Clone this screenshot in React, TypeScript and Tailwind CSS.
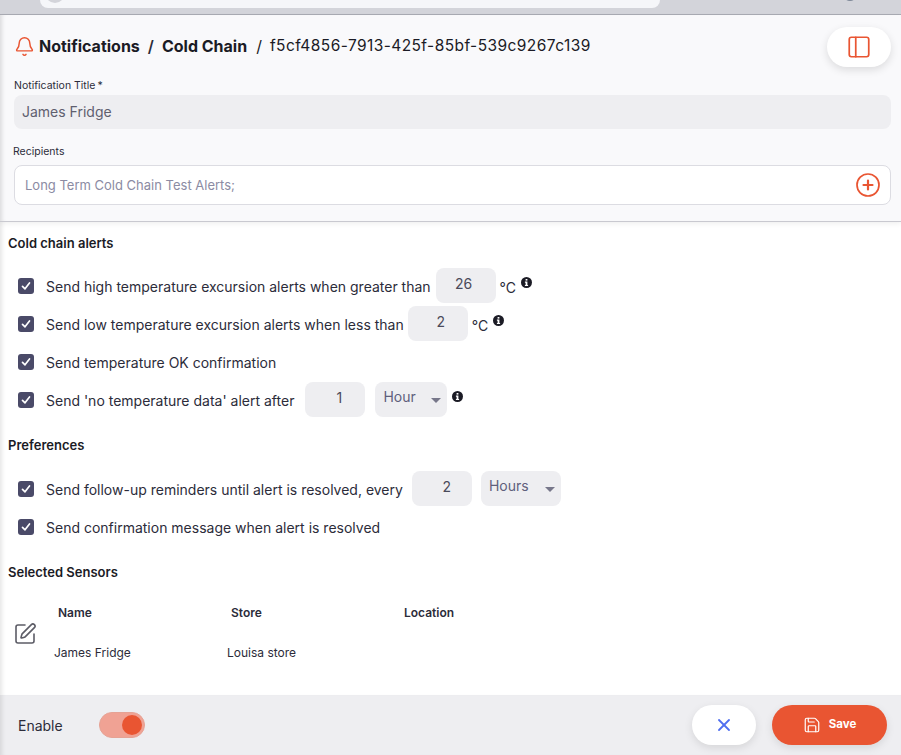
import React from "react";
import { Bell, PanelLeft, X, Save, SquarePen } from "lucide-react";

const Check = () => (
  <span className="flex h-[16px] w-[16px] shrink-0 items-center justify-center rounded-[3px] bg-[#4a4a68]">
    <svg width="12" height="12" viewBox="0 0 12 12" fill="none">
      <path d="M2.5 6.3L5 8.8L9.5 3" stroke="white" strokeWidth="1.7" strokeLinecap="round" strokeLinejoin="round" />
    </svg>
  </span>
);

const Info = () => (
  <svg width="11" height="11" viewBox="0 0 11 11" className="shrink-0">
    <circle cx="5.5" cy="5.5" r="5.5" fill="#1b1b25" />
    <rect x="4.6" y="2" width="1.8" height="1.6" fill="white" />
    <path d="M3.9 4.6H6.4V7.9H7.1V9H3.9V7.9H4.6V5.7H3.9Z" fill="white" />
  </svg>
);

const Num = ({ v, cls = "" }: { v: string; cls?: string }) => (
  <span className={`flex h-[35px] w-[60px] ${cls} shrink-0 items-start justify-center rounded-[8px] bg-[#eeeef1] pt-[6px] text-[14px] leading-[20px] text-[#4a4a5a]`}>
    {v}
  </span>
);

const Sel = ({ v, w }: { v: string; w: string }) => (
  <span className={`relative flex h-[35px] ${w} shrink-0 items-start rounded-[8px] bg-[#eeeef1] pl-[8px] pt-[5px] text-[14px] leading-[20px] text-[#5f5f7c]`}>
    {v}
    <span className="absolute right-[6px] top-[16px] h-0 w-0 border-x-[5px] border-t-[5px] border-x-transparent border-t-[#77778a]" />
  </span>
);

const Row = ({ children }: { children: React.ReactNode }) => (
  <div className="flex h-[38px] items-center pl-[18px] text-[14px] text-[#2c2c3a]">
    <Check />
    {children}
  </div>
);

const Title = ({ children, cls }: { children: React.ReactNode; cls: string }) => (
  <div className={`pl-[8px] text-[13px] font-semibold leading-[16px] text-[#1b1b25] ${cls}`}>{children}</div>
);

export default function App() {
  return (
    <div className="flex h-[755px] w-[901px] flex-col overflow-hidden bg-white font-['Inter',sans-serif]">
      <div className="flex h-[15px] shrink-0 items-start justify-between border-b border-[#a9abb3] bg-[#d3d4da] pl-[40px] pr-[44px]">
        <div className="flex h-[8px] w-[620px] items-start overflow-hidden rounded-b-[14px] bg-[#f5f6f9] pl-[5px]">
          <span className="mt-[-17px] h-[20px] w-[20px] shrink-0 rounded-full bg-[#d3d4da]" />
        </div>
        <span className="mt-[-13px] h-[14px] w-[14px] rounded-full bg-[#7d8797]" />
      </div>

      <div className="flex h-[207px] shrink-0 flex-col border-b border-[#c9c9d0] bg-[#f9f9fb] pl-[14px] pr-[10px] shadow-[inset_5px_0_4px_-3px_rgba(0,0,0,0.12),0_2px_5px_rgba(0,0,0,0.06)]">
        <div className="flex h-[64px] shrink-0 items-start justify-between pt-[12px]">
          <div className="flex h-[40px] items-center pb-[2px]">
            <Bell size={21} strokeWidth={1.7} className="text-[#e95532]" />
            <span className="ml-[4px] text-[16px] font-bold text-[#1b1b25]">Notifications</span>
            <span className="ml-[8px] text-[16px] font-semibold text-[#2c2c3a]">/</span>
            <span className="ml-[8px] text-[16px] font-bold text-[#1b1b25]">Cold Chain</span>
            <span className="ml-[9px] text-[16px] text-[#1b1b25]">/</span>
            <span className="ml-[8px] text-[15.5px] tracking-[0.42px] text-[#1b1b25]">f5cf4856-7913-425f-85bf-539c9267c139</span>
          </div>
          <div className="flex h-[40px] w-[64px] items-center justify-center rounded-[20px] bg-white shadow-[0_3px_8px_rgba(0,0,0,0.12)]">
            <PanelLeft size={26} strokeWidth={1.6} className="text-[#e95532]" />
          </div>
        </div>
        <div className="text-[10.5px] leading-[14px] text-[#2c2c3a]">Notification Title<span className="ml-[2px]">*</span></div>
        <div className="mt-[2px] flex h-[34px] shrink-0 items-center rounded-[8px] bg-[#eeeef1] pb-[2px] pl-[8px] text-[14px] text-[#5f5f6f]">James Fridge</div>
        <div className="ml-[-1px] mt-[16px] text-[10.5px] leading-[14px] text-[#2c2c3a]">Recipients</div>
        <div className="mt-[6px] flex h-[40px] shrink-0 items-center justify-between rounded-[8px] border border-[#dcdce2] bg-white pl-[10px] pr-[10px] text-[14px] text-[#8b8ba3]">
          <span className="pt-[1px] text-[13px]">Long Term Cold Chain Test Alerts;</span>
          <svg width="24" height="24" viewBox="0 0 24 24" fill="none" stroke="#e95532" strokeWidth="1.7" strokeLinecap="round">
            <circle cx="12" cy="12" r="11" />
            <path d="M12 7.5V16.5M7.5 12H16.5" strokeWidth="2.2" />
          </svg>
        </div>
      </div>

      <div className="flex min-h-0 flex-1 flex-col shadow-[inset_5px_0_4px_-3px_rgba(0,0,0,0.1)]">
        <Title cls="mt-[13px]">Cold chain alerts</Title>
        <div className="mt-[16px]">
          <Row>
            <span className="ml-[12px]">Send high temperature excursion alerts when greater than</span>
            <Num v="26" cls="ml-[5px] mb-[1px] pr-[4px]" />
            <span className="ml-[4px] mt-[2px] text-[#2c2c3a]">°C</span>
            <span className="mb-[7px] ml-[5px]"><Info /></span>
          </Row>
          <Row>
            <span className="ml-[12px]">Send low temperature excursion alerts when less than</span>
            <Num v="2" cls="ml-[4px] mb-[1px] pl-[6px]" />
            <span className="ml-[4px] mt-[2px] text-[#2c2c3a]">°C</span>
            <span className="mb-[7px] ml-[5px]"><Info /></span>
          </Row>
          <Row>
            <span className="ml-[12px]">Send temperature OK confirmation</span>
          </Row>
          <Row>
            <span className="ml-[12px]">Send 'no temperature data' alert after</span>
            <Num v="1" cls="ml-[11px] mb-[1px] pl-[8px]" />
            <span className="ml-[10px] mb-[1px] flex"><Sel v="Hour" w="w-[72px]" /></span>
            <span className="mb-[7px] ml-[5px]"><Info /></span>
          </Row>
        </div>
        <Title cls="mt-[18px]">Preferences</Title>
        <div className="mt-[17px]">
          <Row>
            <span className="ml-[12px]">Send follow-up reminders until alert is resolved, every</span>
            <Num v="2" cls="ml-[9px] mb-[1px] pl-[10px]" />
            <span className="ml-[9px] mb-[1px] flex"><Sel v="Hours" w="w-[80px]" /></span>
          </Row>
          <Row>
            <span className="ml-[12px]">Send confirmation message when alert is resolved</span>
          </Row>
        </div>
        <Title cls="mt-[18px]">Selected Sensors</Title>
        <div className="mt-[25px] flex">
          <div className="pl-[13px] pt-[17px]">
            <SquarePen size={24} strokeWidth={1.6} className="text-[#5c5c66]" />
          </div>
          <div className="text-[12px] text-[#2c2c3a]">
            <div className="flex h-[16px] items-center font-semibold">
              <span className="ml-[21px] w-[173px]">Name</span>
              <span className="w-[173px]">Store</span>
              <span>Location</span>
            </div>
            <div className="mt-[24px] flex h-[16px] items-center">
              <span className="ml-[17px] w-[173px]">James Fridge</span>
              <span>Louisa store</span>
            </div>
          </div>
        </div>
      </div>

      <div className="flex h-[60px] shrink-0 items-center justify-between bg-[#eeeef1] pl-[18px] pr-[14px] shadow-[inset_5px_0_4px_-3px_rgba(0,0,0,0.1)]">
        <div className="flex items-center">
          <span className="text-[14px] text-[#2c2c3a]">Enable</span>
          <span className="ml-[36px] flex h-[26px] w-[46px] items-center justify-end rounded-full border border-[#e6a294] bg-[#f0a294] pr-[2px]">
            <span className="h-[20px] w-[20px] rounded-full bg-[#e95532]" />
          </span>
        </div>
        <div className="flex items-center gap-[16px]">
          <div className="flex h-[40px] w-[64px] items-center justify-center rounded-[20px] bg-white shadow-[0_3px_8px_rgba(0,0,0,0.1)]">
            <X size={20} strokeWidth={2.2} className="text-[#4f6ef0]" />
          </div>
          <div className="flex h-[40px] w-[115px] items-center justify-center rounded-[20px] bg-[#e95532] text-white shadow-[0_3px_8px_rgba(0,0,0,0.1)]">
            <Save size={18} strokeWidth={1.6} />
            <span className="ml-[8px] text-[11.5px] font-bold">Save</span>
          </div>
        </div>
      </div>
    </div>
  );
}
